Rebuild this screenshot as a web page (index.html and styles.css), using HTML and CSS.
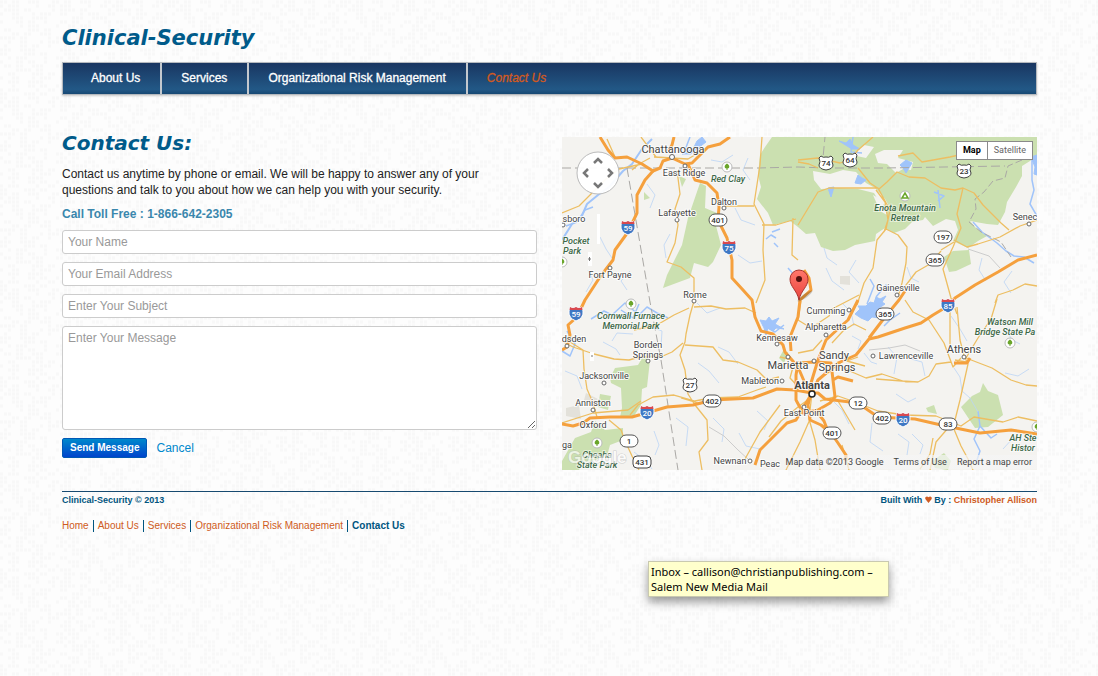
FILE: index.html
```html
<!DOCTYPE html>
<html lang="en">
<head>
<meta charset="utf-8">
<title>Clinical-Security - Contact Us</title>
<link rel="stylesheet" href="styles.css">
</head>
<body>
<div class="container">
  <header>
    <h1 class="brand">Clinical-Security</h1>
    <nav class="navbar" aria-label="Main">
      <a href="#">About Us</a>
      <a href="#">Services</a>
      <a href="#">Organizational Risk Management</a>
      <a href="#" class="active" aria-current="page">Contact Us</a>
    </nav>
  </header>
  <main class="columns">
    <section class="contact">
      <h2>Contact Us:</h2>
      <p class="intro">Contact us anytime by phone or email. We will be happy to answer any of your questions and talk to you about how we can help you with your security.</p>
      <p class="phone">Call Toll Free : 1-866-642-2305</p>
      <form>
        <input type="text" aria-label="Your Name" placeholder="Your Name">
        <input type="email" aria-label="Your Email Address" placeholder="Your Email Address">
        <input type="text" aria-label="Enter Your Subject" placeholder="Enter Your Subject">
        <textarea aria-label="Enter Your Message" placeholder="Enter Your Message"></textarea>
        <div class="actions">
          <button type="submit" class="send">Send Message</button>
          <a href="#" class="cancel">Cancel</a>
        </div>
      </form>
    </section>
    <section class="map" aria-label="Map">
      <svg class="canvas" viewBox="562 137 475 333" role="img" aria-label="Map of Atlanta and northern Georgia">
        <defs>
          <g id="interstate">
            <path d="M-6-6Q-3-4 0-6Q3-4 6-6L7-2Q8 5 0 8Q-8 5-7-2Z" fill="#3f78c4" stroke="#fff"/>
            <path d="M-6-6Q-3-4 0-6Q3-4 6-6L6.500-3H-6.500Z" fill="#d9494f"/>
          </g>
          <rect id="state" x="-9" y="-6" width="18" height="12" rx="6" fill="#fff" stroke="#555"/>
          <path id="us" d="M-5-7Q-3-5 0-6Q3-5 5-7L7-5Q5-1 7 2Q7 6 0 7Q-7 6-7 2Q-5-1-7-5Z" fill="#fff" stroke="#444"/>
          <g id="tree">
            <circle r="5" fill="#fff" stroke="#bbb"/>
            <path d="M0-3.500C3-2 3 1.500.5 1.500V3h-1V1.500C-3 1.500-3-2 0-3.500Z" fill="#6aa52a"/>
          </g>
          <linearGradient id="pinfill" x1="0" y1="0" x2="0" y2="1">
            <stop offset="0" stop-color="#ff776b"/><stop offset="1" stop-color="#e9453e"/>
          </linearGradient>
        </defs>
        <rect x="562" y="137" width="475" height="333" fill="#f4f3f0"/>
        <g fill="#cbe0b0">
          <path d="M772 137L765 147 760 155 758 175 761 187 757 199 768 213 773 225 790 221 798 227 806 234 815 233 821 247 833 251 845 250 855 245 865 243 875 241 876 234 885 228 894 233 905 229 912 222 923 220 925 217 933 226 946 219 955 221 958 230 953 241 968 248 978 241 987 236 976 228 970 221 987 224 998 225 1005 212 1007 202 1016 187 1022 176 1022 166 1030 161 1037 155V137Z"/>
          <path d="M944 257L953 251 969 250 971 264 956 271 949 272Z"/>
          <path d="M700 183L706 186 705 208 717 213 715 222 721 245 713 262 708 267 694 263 690 278 663 288 667 275 682 245 688 218Z"/>
          <path d="M610 378L615 368 638 365 644 355 650 360 647 387 642 389 641 405 634 416 620 417 622 408 621 388 611 383Z"/>
          <path d="M595 421L605 430 623 428 623 440 610 445 607 456 582 464 579 470H562V461L575 438 591 432Z"/>
          <path d="M961 407L972 396 980 392 983 383 988 391 998 395 1003 415 988 427 975 428Z"/>
          <path d="M926 408L934 405 937 414 928 412ZM644 192L650 198 644 200ZM679 176L686 179 682 187ZM600 394L611 396 608 410 598 407ZM783 351L788 352 784 363 779 358ZM932 461L944 453 951 461 948 470 935 468Z"/>
        </g>
        <g fill="#f4f3f0">
          <path d="M813 171L830 174 843 170 856 172 866 183 875 188 885 199 889 206 880 203 874 193 858 189 838 188 821 189 814 180Z"/>
          <path d="M875 154L884 150 903 150 898 158 913 162 911 170 903 169 896 173 887 164 878 163Z"/>
          <path d="M852 155L864 145 874 147 866 158ZM873 195L882 200 887 215 880 211Z"/>
        </g>
        <path d="M566 408L579 405 581 419 566 416ZM586 393L598 399 596 405 584 400ZM840 276L850 276 850 285 840 284Z" fill="#e3e1da"/>
        <!-- water -->
        <g fill="#a0c4fa" stroke="#a0c4fa" stroke-width="1" stroke-linejoin="round">
          <path d="M855 314L860 309 858 306 866 306 870 302 874 303 876 297 880 299 886 296 882 302 885 304 879 308 885 312 878 313 880 318 872 317 868 321 861 318Z"/>
          <path d="M760 320L766 321 769 317 772 321 779 318 775 324 784 329 776 328 773 331 768 328 766 335 764 328Z"/>
          <path d="M682 154L693 149 697 141 702 137 706 142 698 148 691 154ZM839 141L846 143 850 139 853 145 860 149 852 149ZM900 165L906 160 912 163 909 168 906 173 903 168ZM858 175L862 178 866 180 861 184 855 183ZM1031 157L1037 155V175L1034 174 1035 167ZM828 188L834 187 831 197Z"/>
        </g>
        <g fill="none" stroke="#a0c4fa" stroke-width="2" stroke-linejoin="round">
          <path d="M562 240L572 224 581 218 587 204 598 195 609 187 623 171 632 164 642 149 652 139"/>
          <path stroke-width="1.500" d="M566 226L577 222 585 210 593 207M562 351L570 356 575 344 567 331M591 319L604 311 612 315 625 303 639 315 647 307 657 313 668 318M621 310L633 318 639 304M1032 159V180L1034 190 1030 204 1037 216M973 222L982 232 997 243 1006 251 1014 256 1024 257 1034 263M978 411L980 426 974 439 980 451 976 463M980 426L991 438 997 434M867 304L874 286 870 279M876 297L886 285 895 292M938 190L940 208M934 192L944 196 938 201M900 313L890 320 884 326M853 137L851 152 862 153"/>
          <path stroke-width="1.500" d="M766 239L771 235 776 238M774 243L778 247M772 232L780 229M788 268L795 276M763 325L775 332 784 325M690 137L685 150"/>
        </g>
        <g fill="none" stroke="#bbd5f5" stroke-width="1" opacity=".8">
          <path d="M565 371L577 376 582 389M603 342L616 349 620 355M649 326L662 331 661 347M697 303L707 313 720 308M718 347L729 352 738 364M698 363L709 371 719 383M676 418L688 427 686 446M713 418L724 429 722 442M757 411L768 421 764 430M654 431L659 445 655 455M739 433L746 446 760 449M612 341L617 333 633 334M826 268L832 281 844 290M843 304L851 312 854 326M830 398L842 410 849 424M872 423L870 442 883 451M888 347L897 357 894 374M896 394L908 402 916 398M911 359L922 362 925 376M951 316L960 329 967 341M954 368L960 377 962 391 970 398 978 412M1006 329L1012 340 1020 344M1005 373L1018 376 1029 369M1003 449L1014 437M912 434L923 445 920 454M907 267L911 278 919 282M982 258L979 270 986 281M1012 271L1004 282 1011 293M824 248L827 258 837 265M856 260L849 272 859 283M711 160L722 162 733 155M647 184L655 195 650 208M670 234L664 245 666 258M600 237L606 249 612 258M588 270L593 280 586 292M630 271L621 281 627 290M735 208L741 220 755 225M738 255L750 263 762 261M748 158L743 170 750 180M634 452L646 461 652 469M898 434L909 442 907 455M864 353L871 362 877 364M852 336L861 341 858 349"/>
        </g>
        <!-- state borders -->
        <g fill="none" stroke="#aaa8a5" stroke-width="1">
          <path stroke-dasharray="9 4" d="M562 168H758L798 167 827 168 884 168 1005 166M627 168L650 302 661 360 678 470M822 168L825 137"/>
          <path stroke-dasharray="7 3" d="M1022 160L1008 166 1005 178 993 181 984 192 975 199 976 209 969 222 981 232 1001 242 1011 257"/>
          <path stroke="#ccc" d="M968 249L989 256 1000 268M869 350L889 348 905 345 920 351M709 427L724 436 738 450 749 460"/>
        </g>
        <!-- minor roads -->
        <g fill="none" stroke="#edbe62" stroke-width="1.300" stroke-linejoin="round">
          <path d="M562 213L579 206 594 191 607 178 619 169 642 164M607 139L615 157M641 137L656 157 672 158M654 157L688 159 705 149M650 158L639 164 632 170"/>
          <path d="M677 170L680 194 675 209 678 225 675 243 667 262 681 267 694 278 694 301M762 137L760 165 754 204 764 224 763 250 765 280 756 303M723 206L754 206M762 225L776 225 796 219M793 218L792 255 798 260M694 301L690 315 686 334 685 342 680 355 685 370 688 394 695 405 707 420 708 440 699 452 702 470M694 307L711 306 726 309 745 308 756 313M562 341L573 347 594 354 614 359 629 360 640 357 663 356 672 352 683 343M685 345L713 347 723 360 738 362 757 370 767 380 779 377M634 330L657 325 674 315 689 308M570 342L583 350 584 369 587 389 593 403 597 417M630 415L638 405 653 397 674 395 695 401 710 398 738 397 757 390 766 387M701 404L681 398M562 423L593 413 628 410 641 401M609 420L621 430 626 443 632 456 639 470"/>
          <path d="M798 160L818 158 840 163 850 160 858 150 873 137M858 168L870 183 879 189 887 182 897 172 909 177 925 178 941 188 955 190 963 188 974 193 983 205 1001 223 1009 230M798 225L818 192 829 188 860 188 878 188 890 210 886 229 877 240 873 268 864 283 857 305M886 229L898 235 907 247 906 263 902 283 898 297M876 190L885 202 888 220 884 232M963 188L957 214 961 228 953 247 943 269 951 298 957 314M954 240L967 247 978 244 1000 237 1020 226 1037 220M941 250L954 242M941 251L930 264 916 272 903 289M995 303L998 295 1013 290 1025 284 1037 286M898 156L913 153 922 162 950 157 976 151 994 150M818 168L809 164 798 162"/>
          <path d="M905 300L913 312 929 320 944 343 953 367 961 358M957 307L960 340 964 356 968 364 960 400 955 420 936 442 930 470M997 299L991 319 978 338 966 358M942 300L950 311 950 345M966 358L992 368 1011 380 1026 385 1037 386M951 362L936 364 929 376 918 382 902 381 876 379M838 364L852 372 866 378 882 374 906 382M820 401L838 396 855 402 878 411 904 415 936 416 961 426 974 417 1003 422 1018 417 1037 421M933 438L930 454 920 469M951 422L961 446 968 459 973 470M858 357L847 361 865 366M844 360L825 375M798 353L813 350 822 340M832 343L843 331 854 324 866 330M812 393L809 419 815 440 820 470M811 417L800 442 786 470M838 401L855 430M842 445L849 470M780 405L760 432 745 459M803 392L790 378 793 367M780 357L793 360M769 437L781 421 798 407 809 399M955 360L966 362M801 301L798 320 811 328 829 316 832 309 859 295"/>
        </g>
        <!-- highways -->
        <g fill="none" stroke="#f5a03d" stroke-width="3" stroke-linejoin="round">
          <path d="M600 137L608 150 615 158 627 157 642 164 653 171 660 168 663 161 672 158 685 164 692 163 699 156 708 147 720 144 730 137M674 137L672 145 668 151"/>
          <path d="M653 171L645 180 637 195 637 213 628 232 615 250 613 260 600 277 585 300 577 317 568 325 570 335 567 347 562 350"/>
          <path d="M688 164L695 180 707 183 717 193 719 207 718 220 727 238 732 260 732 278 743 290 752 300 755 317 761 331 773 334 783 345 785 352 798 367 804 381 812 393"/>
          <path d="M804 270L809 278 811 290 800 300 798 317 790 337 791 351M858 300L848 320 839 328 826 340 818 360 811 383"/>
          <path d="M905 291L899 300 885 317 869 338M1037 255L1018 260 998 272 975 285 955 298 948 306 933 315 921 323 905 328 878 337 869 339 856 355 838 363 818 380 812 393 796 420 787 423 767 443 760 450 755 465"/>
          <path d="M562 424L573 426 583 423 590 418 610 417 632 417 667 407 693 405 713 400 753 398 777 389 795 390 812 393 818 393 825 399 850 402 865 408 878 417 915 419 941 425 980 433 1011 430 1037 434"/>
          <path d="M798 363L815 362 831 363 833 380 835 397 830 403 818 410 803 413 796 400 796 375ZM833 380L838 377 853 381M970 358L967 363 954 363"/>
          <path d="M811 393L808 405 810 420 821 425 831 433 838 443 846 455 846 461M817 412L824 421 829 434"/>
        </g>
        <!-- town markers -->
        <g fill="#fff" stroke="#666">
          <circle cx="672" cy="157" r="2.500"/><circle cx="685" cy="166" r="2"/><circle cx="724" cy="208" r="2"/><circle cx="677" cy="220" r="2"/><circle cx="610" cy="268" r="2"/><circle cx="694" cy="301" r="2"/><circle cx="567" cy="346" r="2"/><circle cx="648" cy="361" r="2"/><circle cx="604" cy="383" r="2"/><circle cx="593" cy="410" r="2"/><circle cx="777" cy="344" r="2"/><circle cx="788" cy="357" r="2"/><circle cx="782" cy="381" r="2"/><circle cx="849" cy="310" r="2"/><circle cx="826" cy="335" r="2"/><circle cx="814" cy="361" r="2"/><circle cx="873" cy="356" r="2"/><circle cx="964" cy="357" r="2"/><circle cx="897" cy="295" r="2"/><circle cx="804" cy="407" r="2"/><circle cx="750" cy="461" r="2"/><circle cx="1029" cy="224" r="2"/><circle cx="563" cy="225" r="2"/>
          <circle cx="812" cy="394" r="3" stroke="#222" stroke-width="1.500"/>
        </g>
        <use href="#tree" x="727" y="167"/><use href="#tree" x="631" y="304"/><use href="#tree" x="597" y="443"/><use href="#tree" x="1010" y="343"/><use href="#tree" x="1037" y="427"/><use href="#tree" x="562" y="262"/>
        <circle cx="905" cy="196" r="5" fill="#fff" stroke="#bbb"/><path d="M902 198L905 193 908 198Z" fill="none" stroke="#6aa52a" stroke-width="1.500"/>
        <!-- road shields -->
        <use href="#interstate" x="628" y="227"/><use href="#interstate" x="729" y="247"/><use href="#interstate" x="576" y="313"/><use href="#interstate" x="948" y="305"/><use href="#interstate" x="647" y="412"/><use href="#interstate" x="903" y="419"/>
        <use href="#state" x="718" y="220"/><use href="#state" x="943" y="237"/><use href="#state" x="935" y="260"/><use href="#state" x="885" y="314"/><use href="#state" x="712" y="401"/><use href="#state" x="882" y="418"/><use href="#state" x="832" y="433"/><use href="#state" x="858" y="403"/><use href="#state" x="948" y="424"/><use href="#state" x="629" y="441"/>
        <use href="#us" x="826" y="163"/><use href="#us" x="850" y="160"/><use href="#us" x="964" y="171"/><use href="#us" x="690" y="385"/><rect x="633" y="456" width="18" height="12" rx="4" fill="#fff" stroke="#444"/>
        <g class="shield white">
          <text x="628" y="231">59</text><text x="729" y="251">75</text><text x="576" y="317">59</text><text x="948" y="309">85</text><text x="647" y="416">20</text><text x="903" y="423">20</text>
        </g>
        <g class="shield">
          <text x="718" y="223">401</text><text x="943" y="240">197</text><text x="935" y="263">365</text><text x="885" y="317">365</text><text x="712" y="404">402</text><text x="882" y="421">402</text><text x="832" y="436">401</text><text x="858" y="406">12</text><text x="948" y="427">83</text><text x="629" y="444">1</text><text x="826" y="166">74</text><text x="850" y="163">64</text><text x="964" y="174">23</text><text x="690" y="388">27</text><text x="642" y="465">431</text>
        </g>
        <g class="town">
          <text x="684" y="176">East Ridge</text><text x="724" y="205">Dalton</text><text x="677" y="216">Lafayette</text><text x="574" y="222">sboro</text><text x="610" y="278">Fort Payne</text><text x="695" y="298">Rome</text>
          <text x="574" y="342">dsden</text><text x="648" y="348">Borden</text><text x="648" y="358">Springs</text><text x="604" y="379">Jacksonville</text><text x="593" y="406">Anniston</text><text x="593" y="428">Oxford</text><text x="567" y="448">ga</text>
          <text x="777" y="341">Kennesaw</text><text x="760" y="384">Mableton</text><text x="804" y="416">East Point</text><text x="826" y="314">Cumming</text><text x="826" y="330">Alpharetta</text><text x="906" y="359">Lawrenceville</text><text x="898" y="291">Gainesville</text><text x="1025" y="220">Senec</text><text x="730" y="464">Newnan</text><text x="770" y="467">Peac</text>
        </g>
        <g class="city">
          <text x="673" y="153">Chattanooga</text><text x="788" y="369">Marietta</text><text x="834" y="359">Sandy</text><text x="837" y="371">Springs</text><text x="964" y="353">Athens</text><text class="capital" x="812" y="389">Atlanta</text>
        </g>
        <g class="park">
          <text x="728" y="182">Red Clay</text><text x="576" y="244">Pocket</text><text x="572" y="254">Park</text><text x="631" y="319">Cornwall Furnace</text><text x="631" y="329">Memorial Park</text><text x="905" y="211">Enota Mountain</text><text x="905" y="221">Retreat</text><text x="1010" y="325">Watson Mill</text><text x="1005" y="335">Bridge State Pa</text><text x="1023" y="441">AH Ste</text><text x="1023" y="451">Histor</text><text x="597" y="458">Cheaha</text><text x="597" y="468">State Park</text>
        </g>
        <text class="google" x="568" y="463">Google</text>
        <!-- map pin -->
        <ellipse cx="805" cy="296" rx="9" ry="2" transform="rotate(-35 805 296)" fill="#000" opacity=".18"/>
        <path d="M799 300C797 290 790 287 790 279A9 9 0 0 1 808 279C808 287 801 290 799 300Z" fill="url(#pinfill)" stroke="#a9322c"/>
        <circle cx="799" cy="279" r="3" fill="#52100d"/>
        <!-- pan control -->
        <circle cx="598" cy="173" r="21" fill="#fff" fill-opacity=".95" stroke="#bbb"/>
        <path d="M594 163L598 159 602 163M594 183L598 187 602 183M588 169L584 173 588 177M608 169L612 173 608 177" fill="none" stroke="#777" stroke-width="2.500"/>
        <path d="M588 252H592V266H588ZM597 214H600V244H597ZM590 352H594V361H590Z" fill="#fff"/><path d="M588 259H591M589.500 257V261M591 356H593" stroke="#777"/>
      </svg>
      <div class="maptypes">
        <button type="button" class="on">Map</button><button type="button">Satellite</button>
      </div>
      <div class="credits"><span>Map data ©2013 Google</span><a href="#">Terms of Use</a><a href="#">Report a map error</a></div>
    </section>
  </main>
  <footer>
    <div class="legal">
      <span>Clinical-Security © 2013</span>
      <span>Built With <svg class="heart" viewBox="0 0 7 7" aria-hidden="true"><path d="M3.500 7L.5 3.300C-.6 1.200 1.800-.8 3.500 1.300C5.200-.8 7.600 1.200 6.500 3.300Z"/></svg> By : <a href="#">Christopher Allison</a></span>
    </div>
    <nav class="links" aria-label="Footer">
      <a href="#">Home</a><a href="#">About Us</a><a href="#">Services</a><a href="#">Organizational Risk Management</a><a href="#" class="current">Contact Us</a>
    </nav>
  </footer>
</div>
<div class="tooltip" role="tooltip">Inbox – callison@christianpublishing.com – Salem New Media Mail</div>
</body>
</html>
```
FILE: styles.css
```css
* { box-sizing: border-box; }
body {
  margin: 0;
  min-height: 100vh;
  color: #222;
  font: 12px/16px "Liberation Sans", Arial, sans-serif;
  background-color: #fdfdfd;
  background-image: url("data:image/svg+xml,%3Csvg xmlns='http://www.w3.org/2000/svg' width='172' height='96'%3E%3Cg fill='none' stroke='%23000' stroke-opacity='.02' stroke-width='3'%3E%3Cg id='a'%3E%3Cpath stroke-dasharray='3 1 3 5 3 1 3 9 3 1 3 1 3 13' d='M0 2H172M12 34H172M4 66H172'/%3E%3Cpath stroke-dasharray='3 5 3 1 3 1 3 17 3 9 3 1' d='M0 6H172M20 26H172M8 58H172M0 90H172'/%3E%3Cpath stroke-dasharray='3 1 3 1 3 1 3 5 3 1 3 21 3 5' d='M4 10H172M0 38H172M16 70H172'/%3E%3Cpath stroke-dasharray='3 9 3 1 3 13 3 5 3 1 3 1' d='M0 14H172M8 42H172M0 78H172'/%3E%3Cpath stroke-dasharray='3 1 3 1 3 9 3 1 3 1 3 1 3 25' d='M12 18H172M0 50H172M8 82H172'/%3E%3Cpath stroke-dasharray='3 13 3 1 3 5 3 1 3 9' d='M0 22H172M4 46H172M0 62H172M12 86H172'/%3E%3Cpath stroke-dasharray='3 1 3 17 3 1 3 1 3 5' d='M4 30H172M0 54H172M8 74H172M0 94H172'/%3E%3C/g%3E%3C/g%3E%3C/svg%3E");
}
a { text-decoration: none; }
h1, h2, p { margin: 0; }
.container { padding: 24px 61px 0 62px; }
.brand, .contact h2 {
  color: #005b8a;
  font: italic bold 20px/28px "DejaVu Sans", Verdana, sans-serif;
}
.brand { font-size: 21px; }
.navbar {
  display: flex;
  margin-top: 10px;
  height: 33px;
  padding-left: 9px;
  border: 1px solid #b5b9be;
  background: linear-gradient(#193661, #225886 85%, #174873);
  box-shadow: 0 1px 2px rgba(0,0,0,.2);
}
.navbar a {
  padding: 0 20px 0 19px;
  color: #fff;
  line-height: 31px;
  -webkit-text-stroke: 0.3px currentColor;
}
.navbar a + a { border-left: 2px solid #c3c8ce; }
.navbar .active { color: #d35a20; font-style: italic; }
.columns {
  display: grid;
  grid-template-columns: 1fr 1fr;
  gap: 25px;
  margin-top: 42px;
}
.contact { margin-top: -8px; }
.intro { margin-top: 9px; padding-right: 40px; }
.phone { margin-top: 8px; color: #3a87ad; font-weight: bold; }
form { display: flex; flex-direction: column; gap: 8px; margin-top: 8px; }
input, textarea {
  width: 100%;
  border: 1px solid #ccc;
  border-radius: 3px;
  background: #fff;
  padding: 3px 5px;
  color: #555;
  font: 12px/16px "Liberation Sans", Arial, sans-serif;
}
input { height: 24px; }
textarea { height: 104px; display: block; }
::placeholder { color: #999; opacity: 1; }
.actions { display: flex; align-items: center; gap: 9px; }
.send {
  height: 20px;
  padding: 0 7px;
  border: 1px solid #0058b5;
  border-radius: 2px;
  background: linear-gradient(#0088cc, #0044cc);
  color: #fff;
  font: bold 10px/18px "Liberation Sans", Arial, sans-serif;
}
.cancel { color: #0088cc; }
.map { position: relative; }
.canvas { display: block; width: 100%; height: auto; }
.canvas text {
  font-family: Roboto, sans-serif;
  fill: #444;
  text-anchor: middle;
  paint-order: stroke;
  stroke: #fff;
  stroke-opacity: .8;
  stroke-width: 2px;
}
.town text { font-size: 9px; }
.canvas .city text { font-size: 11px; }
.canvas .capital { font-weight: bold; }
.canvas .park text { font-size: 9px; font-style: italic; font-weight: 500; fill: #3c6848; stroke-opacity: .5; }
.canvas .shield text { font-size: 8px; font-weight: 500; stroke: none; fill: #333; }
.canvas .white text { fill: #fff; }
.canvas .google { font: bold 17px "Liberation Sans", Arial, sans-serif; text-anchor: start; fill: #fff; stroke: #aaa; stroke-width: 1px; opacity: .65; }
.maptypes {
  position: absolute;
  top: 4px;
  right: 4px;
  display: flex;
  border: 1px solid #8a8a8a;
}
.maptypes button {
  height: 17px;
  padding: 0 6px;
  border: 0;
  background: #fff;
  color: #666;
  font: 9px/17px Roboto, sans-serif;
}
.maptypes .on { color: #000; font-weight: bold; border-right: 1px solid #8a8a8a; }
.credits {
  position: absolute;
  right: 0;
  bottom: 1px;
  display: flex;
  gap: 10px;
  padding: 0 5px 0 8px;
  background: linear-gradient(90deg, transparent, rgba(245,245,245,.7) 30px);
  font: 9px/14px Roboto, sans-serif;
}
.credits, .credits a { color: #444; }
footer { margin-top: 21px; border-top: 1px solid #174a70; }
.legal {
  display: flex;
  justify-content: space-between;
  color: #005580;
  font-weight: bold;
  font-size: 9px;
}
.legal a { color: #cf5b22; }
.heart { width: 7px; height: 7px; fill: #cf5b22; }
.links { display: flex; align-items: center; margin-top: 12px; font-size: 10px; line-height: 12px; }
.links a { color: #cf5b22; }
.links a + a { margin-left: 4px; padding-left: 4px; border-left: 1px solid #005580; }
.links .current { color: #005580; font-weight: bold; }
.tooltip {
  position: absolute;
  left: 648px;
  top: 561px;
  width: 241px;
  padding: 2px;
  border: 1px solid #c9c9b0;
  background: #ffffcc;
  box-shadow: 0 5px 9px rgba(0,0,0,.4);
  color: #000;
  font: 11px/15px "Noto Sans", sans-serif;
}
```
